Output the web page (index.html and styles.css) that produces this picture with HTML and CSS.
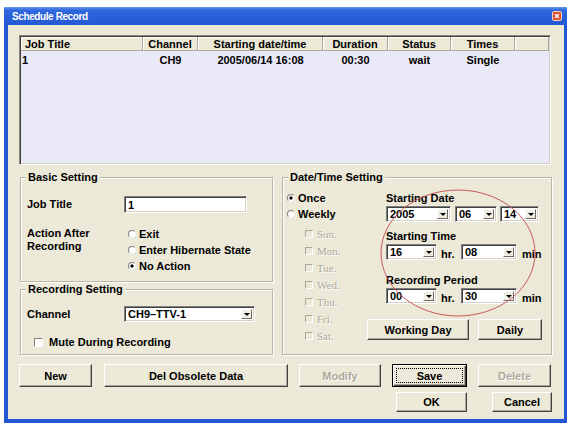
FILE: index.html
```html
<!DOCTYPE html>
<html>
<head>
<meta charset="utf-8">
<title>Schedule Record</title>
<link rel="stylesheet" href="styles.css">
</head>
<body>
<div class="window">
  <div class="titlebar">
    <span class="title">Schedule Record</span>
    <span class="close"><svg width="10" height="10" viewBox="0 0 10 10"><rect x="0.5" y="0.5" width="9" height="9" rx="1.5" fill="#d8522f" stroke="#f3d2c4"/><path d="M3 3L7 7M7 3L3 7" stroke="#fff" stroke-width="1.4"/></svg></span>
  </div>
  <div class="client">
    <div class="list">
      <div class="lrow head">
        <div class="c c1">Job Title</div>
        <div class="c">Channel</div>
        <div class="c">Starting date/time</div>
        <div class="c">Duration</div>
        <div class="c">Status</div>
        <div class="c">Times</div>
        <div class="c"></div>
      </div>
      <div class="lrow data">
        <div class="c c1">1</div>
        <div class="c">CH9</div>
        <div class="c">2005/06/14 16:08</div>
        <div class="c">00:30</div>
        <div class="c">wait</div>
        <div class="c">Single</div>
        <div class="c"></div>
      </div>
    </div>

    <div class="middle">
      <div class="leftcol">
        <div class="group basic">
          <span class="legend">Basic Setting</span>
          <div class="frow">
            <span class="flabel">Job Title</span>
            <div class="input"><span class="val">1</span></div>
          </div>
          <div class="frow action">
            <span class="flabel two">Action After<br>Recording</span>
            <div class="radios">
              <div class="ropt"><span class="radio"></span>Exit</div>
              <div class="ropt"><span class="radio"></span>Enter Hibernate State</div>
              <div class="ropt"><span class="radio on"></span>No Action</div>
            </div>
          </div>
        </div>
        <div class="group recset">
          <span class="legend">Recording Setting</span>
          <div class="frow chan">
            <span class="flabel">Channel</span>
            <div class="combo w131"><span class="val">CH9–TTV-1</span><span class="arrow"></span></div>
          </div>
          <div class="mute"><span class="check"></span>Mute During Recording</div>
        </div>
      </div>

      <div class="group datetime">
        <span class="legend">Date/Time Setting</span>
        <div class="dleft">
          <div class="dropt"><span class="radio on"></span>Once</div>
          <div class="dropt"><span class="radio"></span>Weekly</div>
          <div class="days">
            <div class="day"><span class="check off"></span>Sun.</div>
            <div class="day"><span class="check off"></span>Mon.</div>
            <div class="day"><span class="check off"></span>Tue.</div>
            <div class="day"><span class="check off"></span>Wed.</div>
            <div class="day"><span class="check off"></span>Thu.</div>
            <div class="day"><span class="check off"></span>Fri.</div>
            <div class="day"><span class="check off"></span>Sat.</div>
          </div>
        </div>
        <div class="dright">
          <div class="dlabel la">Starting Date</div>
          <div class="crow">
            <div class="combo w65"><span class="val">2005</span><span class="arrow"></span></div>
            <div class="combo w42 g4"><span class="val">06</span><span class="arrow"></span></div>
            <div class="combo w39 g3"><span class="val">14</span><span class="arrow"></span></div>
          </div>
          <div class="dlabel lb">Starting Time</div>
          <div class="crow">
            <div class="combo w51"><span class="val">16</span><span class="arrow"></span></div>
            <span class="unit hr">hr.</span>
            <div class="combo w56"><span class="val">08</span><span class="arrow"></span></div>
            <span class="unit mn">min</span>
          </div>
          <div class="dlabel lc">Recording Period</div>
          <div class="crow">
            <div class="combo w51"><span class="val">00</span><span class="arrow"></span></div>
            <span class="unit hr">hr.</span>
            <div class="combo w56"><span class="val">30</span><span class="arrow"></span></div>
            <span class="unit mn">min</span>
          </div>
          <div class="dbtns">
            <div class="btn wd">Working Day</div>
            <div class="btn daily">Daily</div>
          </div>
        </div>
      </div>
    </div>

    <div class="brow1">
      <div class="btn b-new">New</div>
      <div class="btn b-del">Del Obsolete Data</div>
      <div class="btn b-mod dis">Modify</div>
      <div class="btn b-save def"><span class="focus">Save</span></div>
      <div class="btn b-dlt dis">Delete</div>
    </div>
    <div class="brow2">
      <div class="btn b-ok">OK</div>
      <div class="btn b-cancel">Cancel</div>
    </div>
  </div>
  <svg class="mark" width="563" height="416" viewBox="0 0 563 416"><ellipse cx="454" cy="246" rx="77" ry="63" fill="none" stroke="#c9585a" stroke-width="1"/></svg>
</div>
</body>
</html>
```

FILE: styles.css
```css
html, body {
  margin: 0;
  padding: 0;
  background: #ffffff;
}
body {
  font-family: "Liberation Sans", Arial, sans-serif;
  font-size: 11px;
  font-weight: bold;
  color: #000;
}

.window {
  position: relative;
  margin: 7px 0 0 4px;
  width: 563px;
  height: 416px;
  box-sizing: border-box;
  padding: 0 3px 4px 4px;
  background: #2157d2;
  display: flex;
  flex-direction: column;
  border-radius: 2px 2px 0 0;
}

.titlebar {
  height: 18px;
  flex-shrink: 0;
  margin: 0 -3px 0 -4px;
  padding: 0 5px 0 8px;
  background: linear-gradient(#6a97ee 0, #3169de 3px, #2a61d9 9px, #2459d3 18px);
  display: flex;
  align-items: center;
  justify-content: space-between;
  border-radius: 2px 2px 0 0;
}
.title {
  color: #fff;
  font-size: 10px;
  letter-spacing: -0.4px;
}
.close svg { display: block; }

.client {
  flex: 1;
  background: #ece9d8;
  padding: 10px 0 0 11px;
  display: flex;
  flex-direction: column;
}

/* list view */
.list {
  width: 532px;
  height: 130px;
  box-sizing: border-box;
  border: 1px solid;
  border-color: #8a8878 #fff #fff #8a8878;
  box-shadow: inset 1px 1px #404040, inset -1px -1px #d4d0c8;
  background: #e9e9f7;
  padding: 1px;
}
.lrow {
  display: grid;
  grid-template-columns: 122px 55px 125px 65px 63px 64px 1fr;
}
.lrow .c {
  display: flex;
  align-items: center;
  justify-content: center;
  white-space: nowrap;
}
.lrow .c1 { justify-content: flex-start; }
.head { height: 14px; background: #ece9d8; }
.head .c {
  box-sizing: border-box;
  border-right: 1px solid #aca899;
  border-bottom: 1px solid #aca899;
  box-shadow: inset 1px 1px #fff;
}
.head .c1 { padding-left: 4px; }
.data { height: 18px; }
.data .c1 { padding-left: 1px; }

/* group boxes */
.middle {
  display: flex;
  gap: 9px;
  margin: 12px 0 0 1px;
}
.leftcol {
  display: flex;
  flex-direction: column;
  gap: 7px;
  width: 253px;
}
.group {
  position: relative;
  box-sizing: border-box;
  border: 1px solid #b9b6a6;
  box-shadow: inset 1px 1px #fff, 1px 1px #fff;
}
.legend {
  position: absolute;
  top: -7px;
  left: 5px;
  padding: 0 2px;
  line-height: 13px;
  background: #ece9d8;
}

.basic { height: 105px; padding: 18px 0 0 6px; }
.frow {
  display: grid;
  grid-template-columns: 97px auto;
  align-items: center;
  justify-items: start;
}
.flabel { line-height: 13px; }
.flabel.two { align-self: start; padding-top: 1px; }
.action { margin-top: 13px; align-items: start; }
.radios { padding-left: 4px; }
.ropt, .dropt {
  display: flex;
  align-items: center;
  gap: 3px;
  height: 16px;
  white-space: nowrap;
}

.radio {
  width: 8px;
  height: 8px;
  box-sizing: border-box;
  border-radius: 50%;
  border: 1px solid;
  border-color: #808080 #f4f3ee #f4f3ee #808080;
  background: #fff;
  flex-shrink: 0;
}
.radio.on { background: radial-gradient(circle, #000 0, #000 1.3px, #fff 1.9px); }

.check {
  width: 9px;
  height: 9px;
  box-sizing: border-box;
  border: 1px solid;
  border-color: #808080 #fff #fff #808080;
  background: #fff;
  flex-shrink: 0;
}
.check.off {
  width: 8px;
  height: 8px;
  background: #ece9d8;
  border-color: #aca899 #fff #fff #aca899;
}

.recset { height: 66px; padding: 16px 0 0 6px; }
.mute {
  display: flex;
  align-items: center;
  gap: 6px;
  height: 14px;
  margin-top: 13px;
  padding-left: 7px;
}

/* inputs */
.input, .combo {
  box-sizing: border-box;
  background: #fff;
  border: 1px solid;
  border-color: #808080 #fff #fff #808080;
  box-shadow: inset 1px 1px #404040, inset -1px -1px #d4d0c8;
  display: flex;
  align-items: stretch;
  padding: 2px;
}
.input { width: 123px; height: 17px; }
.combo { height: 16px; }
.val {
  flex: 1;
  display: flex;
  align-items: center;
  padding-left: 1px;
  white-space: nowrap;
  overflow: hidden;
}
.arrow {
  width: 11px;
  box-sizing: border-box;
  background: #f1efe4;
  border: 1px solid;
  border-color: #fff #6f6d62 #6f6d62 #fff;
  display: flex;
  align-items: center;
  justify-content: center;
}
.arrow::before {
  content: "";
  border-left: 3px solid transparent;
  border-right: 3px solid transparent;
  border-top: 3px solid #000;
}
.w131 { width: 131px; }
.w65 { width: 65px; }
.w42 { width: 42px; }
.w39 { width: 39px; }
.w51 { width: 51px; }
.w56 { width: 56px; }
.g4 { margin-left: 4px; }
.g3 { margin-left: 3px; }

/* date/time */
.datetime {
  width: 270px;
  height: 178px;
  display: flex;
  padding: 12px 0 0 4px;
}
.dleft { width: 80px; }
.days { margin-top: 3px; padding-left: 18px; }
.day {
  display: flex;
  align-items: center;
  gap: 4px;
  height: 17px;
  font-family: "Liberation Serif", "Times New Roman", serif;
  font-weight: normal;
  font-size: 11px;
  color: #aca899;
  text-shadow: 1px 1px 0 #fff;
}
.dright { width: 176px; }
.dlabel { line-height: 13px; padding-left: 19px; }
.la { margin-top: 2px; }
.lb { margin-top: 8px; }
.lc { margin-top: 14px; }
.crow {
  display: flex;
  align-items: flex-end;
  margin-top: 1px;
  padding-left: 19px;
}
.unit { line-height: 11px; }
.hr { width: 24px; padding-left: 4px; box-sizing: border-box; }
.mn { margin-left: 5px; }
.dbtns {
  display: flex;
  gap: 9px;
  margin-top: 15px;
  height: 21px;
}
.wd { width: 102px; }
.daily { width: 64px; }

/* buttons */
.btn {
  box-sizing: border-box;
  background: #ece9d8;
  border: 1px solid;
  border-color: #fff #404040 #404040 #fff;
  box-shadow: inset -1px -1px #aca899;
  display: flex;
  align-items: center;
  justify-content: center;
  white-space: nowrap;
}
.btn.dis {
  color: #aca899;
  text-shadow: 1px 1px 0 #fff;
}
.btn.def {
  border-color: #000;
  box-shadow: inset 1px 1px #fff, inset -1px -1px #404040, inset -2px -2px #aca899;
  padding: 3px;
  align-items: stretch;
}
.focus {
  flex: 1;
  display: flex;
  align-items: center;
  justify-content: center;
  border: 1px dotted #000;
}
.brow1 {
  display: flex;
  gap: 11px;
  height: 23px;
  margin-top: 9px;
}
.b-new { width: 73px; margin-right: 1px; }
.b-del { width: 184px; }
.b-mod { width: 82px; }
.b-save { width: 75px; }
.b-dlt { width: 73px; }
.brow2 {
  display: flex;
  gap: 25px;
  height: 20px;
  margin-top: 5px;
  padding-left: 377px;
}
.b-ok { width: 71px; }
.b-cancel { width: 60px; }

.mark {
  position: absolute;
  left: 0;
  top: 0;
  pointer-events: none;
}
```
